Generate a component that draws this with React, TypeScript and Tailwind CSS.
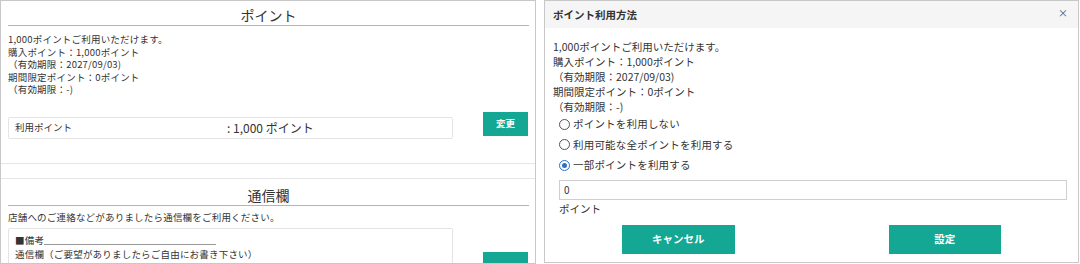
import { useState } from "react";

const font = { fontFamily: '"Noto Sans CJK JP", "Noto Sans", sans-serif' };

function Radio({ checked, label }: { checked?: boolean; label: string }) {
	return (
		<div className="flex h-[20.5px] items-center gap-[3px] pl-[14px]">
			<span
				className={
					"flex h-[11px] w-[11px] items-center justify-center rounded-full border " +
					(checked ? "border-[#2f6fc6]" : "border-[#555]")
				}
			>
				{checked && <span className="h-[5px] w-[5px] rounded-full bg-[#2f6fc6]" />}
			</span>
			<span className="text-[10.5px] tracking-[0.2px]">{label}</span>
		</div>
	);
}

function LeftPanel() {
	return (
		<div className="flex h-[264px] w-[536px] flex-col overflow-hidden border border-[#c8c8c8] text-[#333]">
			<div className="border-b border-[#e6e6e6] pb-[24px]">
				<div className="ml-[7px] mr-[6px] mt-[4px] border-b border-[#b4b4b4] text-center text-[14px] leading-[20px]">
					ポイント
				</div>
				<div className="ml-[7px] mt-[7px] text-[9.5px] leading-[12.5px] tracking-[0.2px]">
					<div>1,000ポイントご利用いただけます。</div>
					<div>購入ポイント：1,000ポイント</div>
					<div>（有効期限：2027/09/03)</div>
					<div>期間限定ポイント：0ポイント</div>
					<div>（有効期限：-)</div>
				</div>
				<div className="ml-[7px] mt-[16px] flex items-start">
					<div className="mt-[5px] flex h-[22px] w-[445px] items-center rounded-[2px] border border-[#e4e4e4] px-[6px]">
						<span className="w-[212px] text-[9.5px]">利用ポイント</span>
						<span className="text-[12px]">: 1,000 ポイント</span>
					</div>
					<button className="ml-[30px] h-[24px] w-[45px] bg-[#14a794] text-[9.5px] font-bold text-white">変更</button>
				</div>
			</div>
			<div className="mt-[14px] border-t border-[#e6e6e6]">
				<div className="ml-[7px] mr-[6px] mt-[6px] border-b border-[#b4b4b4] text-center text-[14px] leading-[20px]">
					通信欄
				</div>
				<div className="ml-[7px] mt-[5px] text-[9.5px] leading-[12.5px] tracking-[0.2px]">
					店舗へのご連絡などがありましたら通信欄をご利用ください。
				</div>
				<div className="ml-[7px] mt-[5px] flex items-start">
					<div className="h-[40px] w-[445px] rounded-[2px] border border-[#e4e4e4] px-[6px] pt-[4px] text-[9.5px] leading-[14px] tracking-[0.2px]">
						<div className="flex items-end">
							<span>■備考</span>
							<span className="mb-[2px] inline-block w-[172px] border-b border-[#999]" />
						</div>
						<div>通信欄（ご要望がありましたらご自由にお書き下さい）</div>
					</div>
					<button aria-label="変更" className="ml-[30px] mt-[24px] h-[24px] w-[45px] bg-[#14a794]" />
				</div>
			</div>
		</div>
	);
}

function RightPanel() {
	const [value, setValue] = useState("0");
	return (
		<div className="flex h-[263px] w-[535px] flex-col border border-[#c8c8c8] text-[#333]">
			<div className="flex h-[27px] items-center justify-between bg-[#f5f5f5] pl-[8px] pr-[10px]">
				<span className="text-[10.5px] font-bold">ポイント利用方法</span>
				<span className="-mt-[4px] text-[10px] text-[#555]">×</span>
			</div>
			<div className="pl-[8px] pt-[11px] text-[10.5px] leading-[15px]">
				<div>1,000ポイントご利用いただけます。</div>
				<div>購入ポイント：1,000ポイント</div>
				<div>（有効期限：2027/09/03)</div>
				<div>期間限定ポイント：0ポイント</div>
				<div>（有効期限：-)</div>
			</div>
			<div>
				<Radio label="ポイントを利用しない" />
				<Radio label="利用可能な全ポイントを利用する" />
				<Radio checked label="一部ポイントを利用する" />
			</div>
			<input
				value={value}
				onChange={(e) => setValue(e.target.value)}
				className="ml-[14px] mt-[4px] h-[20px] w-[508px] border border-[#cfcfcf] px-[4px] text-[10px] text-[#333] outline-none"
			/>
			<div className="ml-[14px] mt-[1px] text-[10.5px] leading-[15px]">ポイント</div>
			<div className="mt-[9px] grid grid-cols-2">
				<div className="flex justify-center">
					<button className="h-[29px] w-[113px] bg-[#14a794] text-[10.5px] font-bold text-white">キャンセル</button>
				</div>
				<div className="flex justify-center">
					<button className="h-[29px] w-[112px] bg-[#14a794] text-[10.5px] font-bold text-white">設定</button>
				</div>
			</div>
		</div>
	);
}

export default function App() {
	return (
		<div className="flex h-[264px] w-[1080px] gap-[8px] overflow-hidden bg-white" style={font}>
			<LeftPanel />
			<RightPanel />
		</div>
	);
}
